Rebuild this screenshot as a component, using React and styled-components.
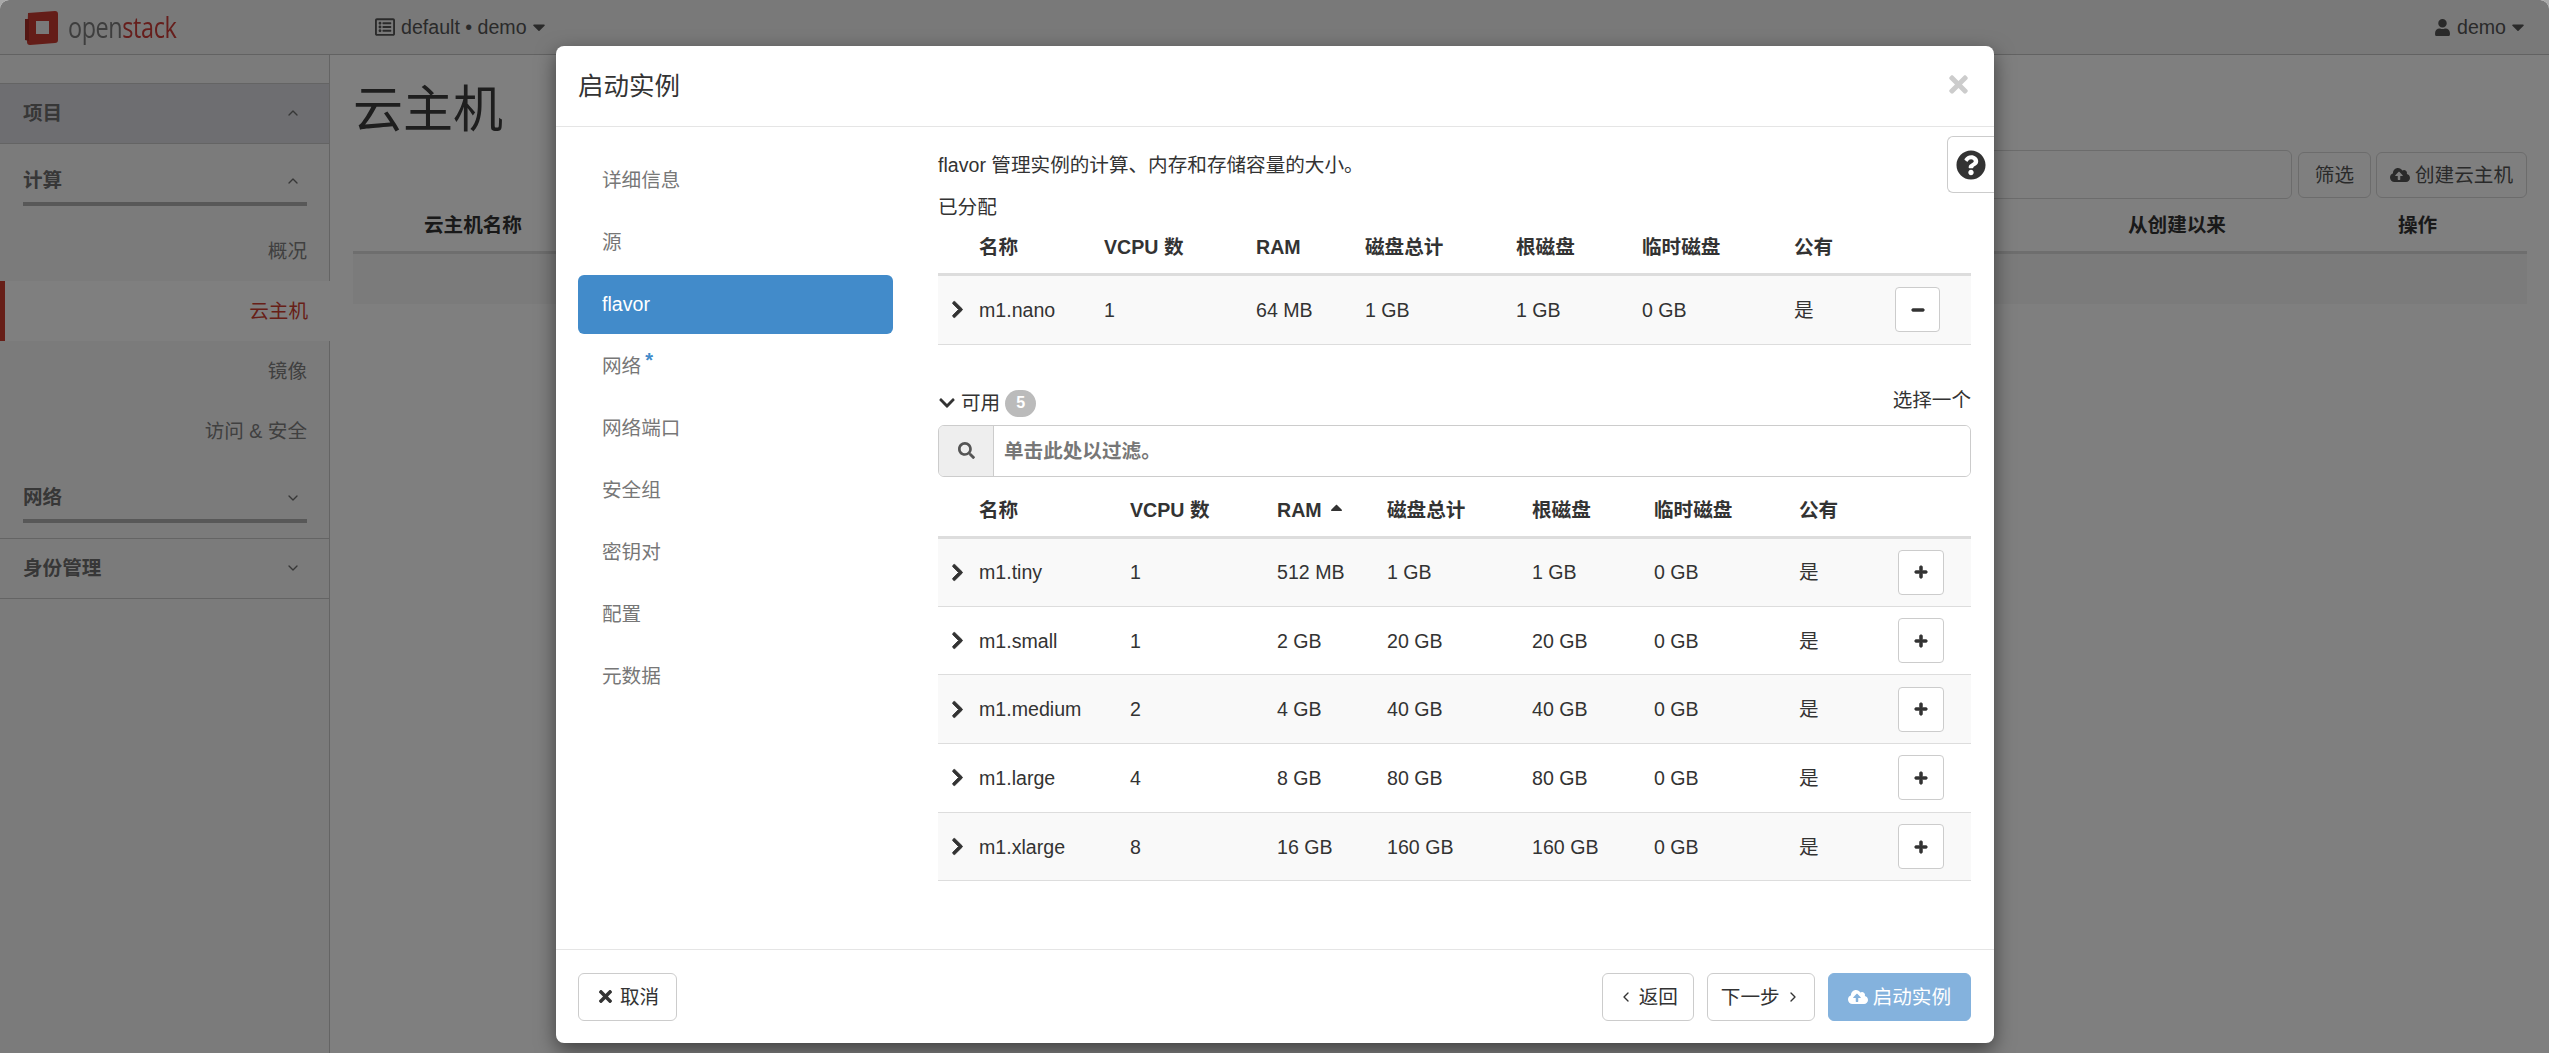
import * as React from "react";
import styled, { createGlobalStyle } from "styled-components";
import {
  FaCaretDown,
  FaCaretUp,
  FaChevronDown,
  FaChevronRight,
  FaCloudUploadAlt,
  FaMinus,
  FaPlus,
  FaQuestionCircle,
  FaRegListAlt,
  FaSearch,
  FaTimes,
  FaUser,
} from "react-icons/fa";
import { ChevronDown, ChevronLeft, ChevronRight, ChevronUp } from "lucide-react";

const GlobalStyle = createGlobalStyle`
  html, body {
    margin: 0;
    padding: 0;
    height: 100%;
    background: #a8a8a8;
  }
  body {
    font-family: "Liberation Sans", "Noto Sans CJK SC", sans-serif;
    font-size: 19.6px;
    line-height: 28px;
    color: #333;
  }
  * {
    box-sizing: border-box;
  }
`;

const Page = styled.div`
  position: relative;
  height: 1053px;
  overflow: hidden;
  display: flex;
  flex-direction: column;
  background: #fff;
  border-radius: 9px 9px 0 0;
`;

/* top bar */
const TopBar = styled.header`
  height: 55px;
  flex: none;
  display: flex;
  align-items: center;
  padding-right: 21px;
  background: #f2f2f2;
  border-bottom: 1px solid #c4c4c4;
  color: #555;
`;

const Brand = styled.div`
  width: 375px;
  padding-left: 25px;
  display: flex;
  align-items: center;
  gap: 9px;
  filter: blur(0.4px);
`;

const BrandText = styled.span`
  font-family: "Open Sans", sans-serif;
  font-size: 30px;
  font-weight: 400;
  letter-spacing: -0.5px;
  color: #7c7c7c;
  transform: scaleX(0.78);
  transform-origin: left center;
  span {
    color: #cc3d38;
  }
`;

const Dropdown = styled.div`
  display: flex;
  align-items: center;
  gap: 6px;
  margin-left: ${(p) => (p.$right ? "auto" : "0")};
`;

const Caret = styled(FaCaretDown)`
  margin-left: -4px;
`;

/* left column */
const Columns = styled.div`
  flex: 1;
  display: flex;
  min-height: 0;
`;

const Sidebar = styled.aside`
  width: 330px;
  flex: none;
  background: #f7f7f7;
  border-right: 1px solid #c8c8c8;
`;

const SideTop = styled.div`
  height: 29px;
  border-bottom: 1px solid #c8c8c8;
`;

const Section = styled.section`
  background: ${(p) => (p.$current ? "#dcdde2" : "transparent")};
  border-bottom: ${(p) => (p.$plain ? "none" : "1px solid #c8c8c8")};
  padding: ${(p) => (p.$tail ? "0 0 15px" : "0")};
`;

const SectionHead = styled.div`
  margin: 0 22px 0 23px;
  height: ${(p) => (p.$rule ? "62px" : "59px")};
  display: flex;
  align-items: ${(p) => (p.$rule ? "flex-start" : "center")};
  justify-content: space-between;
  padding: ${(p) => (p.$rule ? "22px 6px 0 0" : "0 6px 2px 0")};
  font-weight: 700;
  color: #6e6e6e;
  border-bottom: ${(p) => (p.$rule ? "4px solid #b0b0b0" : "none")};
  svg {
    margin-top: ${(p) => (p.$rule ? "7px" : "0")};
  }
`;

const SideList = styled.ul`
  list-style: none;
  margin: 0;
  padding: 15px 0 0;
`;

const SideItem = styled.li`
  height: 60px;
  line-height: 60px;
  text-align: right;
  padding-right: 22px;
  color: ${(p) => (p.$active ? "#cf3e30" : "#808080")};
  background: ${(p) => (p.$active ? "#fff" : "transparent")};
  border-left: ${(p) => (p.$active ? "5px solid #cf3e30" : "none")};
  margin-right: ${(p) => (p.$active ? "-1px" : "0")};
  position: relative;
`;

/* content behind the modal */
const Main = styled.main`
  flex: 1;
  padding: 0 22px 0 23px;
  min-width: 0;
`;

const PageTitle = styled.h1`
  margin: 0;
  height: 95px;
  padding-top: 28px;
  font-size: 50px;
  line-height: 54px;
  font-weight: 400;
  color: #3c3c3c;
`;

const Toolbar = styled.div`
  display: flex;
  justify-content: flex-end;
  align-items: center;
  gap: 5px;
  height: 49px;
`;

const FilterBox = styled.div`
  width: 500px;
  height: 49px;
  margin-right: 1px;
  border: 1px solid #d8d8d8;
  border-radius: 6px;
`;

const Button = styled.button`
  height: ${(p) => p.$h || "48px"};
  padding: 0 ${(p) => p.$pad || "14px"};
  display: inline-flex;
  align-items: center;
  gap: 5px;
  font: inherit;
  color: #333;
  background: #fff;
  border: 1px solid #ccc;
  border-radius: 6px;
`;

const ToolButton = styled(Button)`
  color: #555;
  background: transparent;
  border-color: #d8d8d8;
`;

const PrimaryButton = styled(Button)`
  color: #fff;
  background: #84b2dd;
  border-color: #84b2dd;
`;

const Table = styled.table`
  width: 100%;
  table-layout: fixed;
  border-collapse: collapse;
  margin-top: ${(p) => p.$top || "0"};
  th {
    height: 53px;
    padding: 0 11px;
    text-align: left;
    font-weight: 700;
    border-bottom: 3px solid #ddd;
    white-space: nowrap;
  }
  td {
    height: ${(p) => p.$row || "70px"};
    padding: 0 11px;
    border-bottom: 1px solid #ddd;
    white-space: nowrap;
  }
  tbody tr:nth-child(odd) td {
    background: #f9f9f9;
  }
`;

const MainTable = styled(Table)`
  td {
    height: 52px;
    border: none;
  }
  tbody tr:nth-child(odd) td {
    background: #f7f7f7;
  }
`;

/* modal */
const Backdrop = styled.div`
  position: absolute;
  inset: 0;
  background: rgba(0, 0, 0, 0.5);
`;

const Modal = styled.div`
  position: absolute;
  top: 46px;
  left: 556px;
  width: 1438px;
  height: 997px;
  display: flex;
  flex-direction: column;
  background: #fff;
  border-radius: 8px;
  box-shadow: 0 7px 20px rgba(0, 0, 0, 0.5);
`;

const ModalHead = styled.div`
  height: 81px;
  flex: none;
  display: flex;
  align-items: center;
  justify-content: space-between;
  padding: 0 22px 0 22px;
  border-bottom: 1px solid #e5e5e5;
  h2 {
    margin: 0;
    font-size: 25.5px;
    font-weight: 400;
  }
  svg {
    color: #ccc;
    margin-bottom: 4px;
  }
`;

const HelpTab = styled.div`
  position: absolute;
  top: 90px;
  right: 0;
  width: 47px;
  height: 57px;
  display: flex;
  align-items: center;
  justify-content: center;
  background: #fff;
  border: 1px solid #ccc;
  border-right: none;
  border-radius: 6px 0 0 6px;
  padding-right: 1px;
`;

const ModalBody = styled.div`
  flex: 1;
  display: flex;
  gap: 45px;
  padding: 24px 23px 0 22px;
  min-height: 0;
`;

const WizardNav = styled.ul`
  width: 315px;
  flex: none;
  list-style: none;
  margin: 0;
  padding: 0;
  display: flex;
  flex-direction: column;
  gap: 3px;
`;

const WizardItem = styled.li`
  height: 59px;
  line-height: 59px;
  padding-left: 24px;
  border-radius: 6px;
  color: ${(p) => (p.$active ? "#fff" : "#777")};
  background: ${(p) => (p.$active ? "#428bca" : "transparent")};
  sup {
    color: #428bca;
    font-size: 20px;
    font-weight: 700;
    line-height: 0;
    margin-left: 4px;
    vertical-align: 6px;
  }
`;

const Pane = styled.div`
  flex: 1;
  min-width: 0;
`;

const Intro = styled.p`
  margin: 0 0 14px;
`;

const GroupLabel = styled.div`
  height: 28px;
`;

const AvailableRow = styled.div`
  display: flex;
  align-items: center;
  margin-top: 45px;
  height: 27px;
`;

const AvailableTitle = styled.div`
  display: flex;
  align-items: center;
  gap: 5px;
`;

const Badge = styled.span`
  width: 31px;
  height: 27px;
  display: inline-flex;
  align-items: center;
  justify-content: center;
  border-radius: 14px;
  background: #bbb;
  color: #fff;
  font-size: 16px;
  font-weight: 700;
`;

const PickOne = styled.div`
  margin-left: auto;
  margin-top: -7px;
`;

const SearchGroup = styled.div`
  display: flex;
  height: 52px;
  margin-top: 8px;
  border: 1px solid #ccc;
  border-radius: 6px;
  overflow: hidden;
`;

const SearchAddon = styled.span`
  width: 55px;
  flex: none;
  display: flex;
  align-items: center;
  justify-content: center;
  background: #eee;
  border-right: 1px solid #ccc;
  color: #555;
`;

const SearchInput = styled.input`
  flex: 1;
  border: none;
  outline: none;
  padding: 0 10px;
  font: inherit;
  font-weight: 700;
  &::placeholder {
    color: #777;
    opacity: 1;
  }
`;

const RowButton = styled.button`
  width: ${(p) => p.$w};
  height: 45px;
  padding: 0;
  display: flex;
  align-items: center;
  justify-content: center;
  color: #333;
  background: #fff;
  border: 1px solid #ccc;
  border-radius: 4px;
  svg {
    stroke: currentColor;
    stroke-width: 30px;
  }
`;

const Expander = styled.td`
  && {
    padding: 0 0 0 10px;
  }
  svg {
    display: block;
    stroke: currentColor;
    stroke-width: 24px;
  }
`;

const HeadText = styled.span`
  display: inline-flex;
  align-items: center;
  gap: 5px;
  svg {
    margin-top: -5px;
  }
`;

const ModalFoot = styled.div`
  height: 94px;
  flex: none;
  display: flex;
  align-items: center;
  justify-content: space-between;
  padding: 0 23px 0 22px;
  border-top: 1px solid #e5e5e5;
`;

const FootGroup = styled.div`
  display: flex;
  gap: 13px;
`;

const navItems = ["详细信息", "源", "flavor", "网络", "网络端口", "安全组", "密钥对", "配置", "元数据"];
const headers = ["名称", "VCPU 数", "RAM", "磁盘总计", "根磁盘", "临时磁盘", "公有"];
const allocated = [["m1.nano", "1", "64 MB", "1 GB", "1 GB", "0 GB", "是"]];
const available = [
  ["m1.tiny", "1", "512 MB", "1 GB", "1 GB", "0 GB", "是"],
  ["m1.small", "1", "2 GB", "20 GB", "20 GB", "0 GB", "是"],
  ["m1.medium", "2", "4 GB", "40 GB", "40 GB", "0 GB", "是"],
  ["m1.large", "4", "8 GB", "80 GB", "80 GB", "0 GB", "是"],
  ["m1.xlarge", "8", "16 GB", "160 GB", "160 GB", "0 GB", "是"],
];

const Cols = ({ widths }) => (
  <colgroup>
    {widths.map((w, i) => (
      <col key={i} width={w} />
    ))}
  </colgroup>
);

const FlavorTable = ({ widths, rows, top, rowHeight, sorted, action }) => (
  <Table $top={top} $row={rowHeight}>
    <Cols widths={widths} />
    <thead>
      <tr>
        <th />
        {headers.map((h) => (
          <th key={h}>
            <HeadText>
              {h}
              {sorted && h === "RAM" ? <FaCaretUp size={19} /> : null}
            </HeadText>
          </th>
        ))}
        <th />
      </tr>
    </thead>
    <tbody>
      {rows.map((row) => (
        <tr key={row[0]}>
          <Expander>
            <FaChevronRight size={19} />
          </Expander>
          {row.map((cell, i) => (
            <td key={i}>{cell}</td>
          ))}
          <td>{action}</td>
        </tr>
      ))}
    </tbody>
  </Table>
);

const Logo = () => (
  <svg width="34" height="35" viewBox="0 0 34 35">
    <path
      fill="#c93a30"
      fillRule="evenodd"
      d="M3 3 L30 1 Q33 1 33 4 L33 30 Q33 33 30 33 L5 35 Q2 35 2 32 Z M11 11 L11 24 L24 24 L24 11 Z"
    />
    <path fill="#a82d26" d="M0 9 L4 9 L4 31 L0 30 Z" />
  </svg>
);

export default function App() {
  return (
    <>
      <GlobalStyle />
      <Page>
        <TopBar>
          <Brand>
            <Logo />
            <BrandText>
              open<span>stack</span>
            </BrandText>
          </Brand>
          <Dropdown>
            <FaRegListAlt size={20} />
            default • demo
            <Caret size={20} />
          </Dropdown>
          <Dropdown $right>
            <FaUser size={17} />
            demo
            <Caret size={20} />
          </Dropdown>
        </TopBar>
        <Columns>
          <Sidebar>
            <SideTop />
            <Section $current>
              <SectionHead>
                项目
                <ChevronUp size={16} strokeWidth={2} />
              </SectionHead>
            </Section>
            <Section $plain>
              <SectionHead $rule>
                计算
                <ChevronUp size={16} strokeWidth={2} />
              </SectionHead>
              <SideList>
                <SideItem>概况</SideItem>
                <SideItem $active>云主机</SideItem>
                <SideItem>镜像</SideItem>
                <SideItem>访问 &amp; 安全</SideItem>
              </SideList>
            </Section>
            <Section $tail>
              <SectionHead $rule>
                网络
                <ChevronDown size={16} strokeWidth={2} />
              </SectionHead>
            </Section>
            <Section>
              <SectionHead>
                身份管理
                <ChevronDown size={16} strokeWidth={2} />
              </SectionHead>
            </Section>
          </Sidebar>
          <Main>
            <PageTitle>云主机</PageTitle>
            <Toolbar>
              <FilterBox />
              <ToolButton $h="46px" $pad="16px">
                筛选
              </ToolButton>
              <ToolButton $h="46px" $pad="13px">
                <FaCloudUploadAlt size={20} />
                创建云主机
              </ToolButton>
            </Toolbar>
            <MainTable>
              <Cols widths={[60, 1704, 270, 140]} />
              <thead>
                <tr>
                  <th />
                  <th>云主机名称</th>
                  <th>从创建以来</th>
                  <th>操作</th>
                </tr>
              </thead>
              <tbody>
                <tr>
                  <td colSpan={4} />
                </tr>
              </tbody>
            </MainTable>
          </Main>
        </Columns>
        <Backdrop />
        <Modal>
          <ModalHead>
            <h2>启动实例</h2>
            <FaTimes size={27} />
          </ModalHead>
          <HelpTab>
            <FaQuestionCircle size={30} />
          </HelpTab>
          <ModalBody>
            <WizardNav>
              {navItems.map((item) => (
                <WizardItem key={item} $active={item === "flavor"}>
                  {item}
                  {item === "网络" ? <sup>*</sup> : null}
                </WizardItem>
              ))}
            </WizardNav>
            <Pane>
              <Intro>flavor 管理实例的计算、内存和存储容量的大小。</Intro>
              <GroupLabel>已分配</GroupLabel>
              <FlavorTable
                widths={[30, 125, 152, 109, 151, 126, 152, 101, 87]}
                rows={allocated}
                action={
                  <RowButton $w="45px">
                    <FaMinus size={14} />
                  </RowButton>
                }
              />
              <AvailableRow>
                <AvailableTitle>
                  <FaChevronDown size={18} />
                  可用
                  <Badge>5</Badge>
                </AvailableTitle>
                <PickOne>选择一个</PickOne>
              </AvailableRow>
              <SearchGroup>
                <SearchAddon>
                  <FaSearch size={17} />
                </SearchAddon>
                <SearchInput placeholder="单击此处以过滤。" />
              </SearchGroup>
              <FlavorTable
                widths={[30, 151, 147, 110, 145, 122, 145, 99, 84]}
                rows={available}
                top="8px"
                rowHeight="68.7px"
                sorted
                action={
                  <RowButton $w="46px">
                    <FaPlus size={14} />
                  </RowButton>
                }
              />
            </Pane>
          </ModalBody>
          <ModalFoot>
            <Button $pad="17px">
              <FaTimes size={19} />
              取消
            </Button>
            <FootGroup>
              <Button $pad="15px">
                <ChevronLeft size={16} strokeWidth={2} />
                返回
              </Button>
              <Button $pad="13px">
                下一步
                <ChevronRight size={16} strokeWidth={2} />
              </Button>
              <PrimaryButton $pad="19px">
                <FaCloudUploadAlt size={20} />
                启动实例
              </PrimaryButton>
            </FootGroup>
          </ModalFoot>
        </Modal>
      </Page>
    </>
  );
}
